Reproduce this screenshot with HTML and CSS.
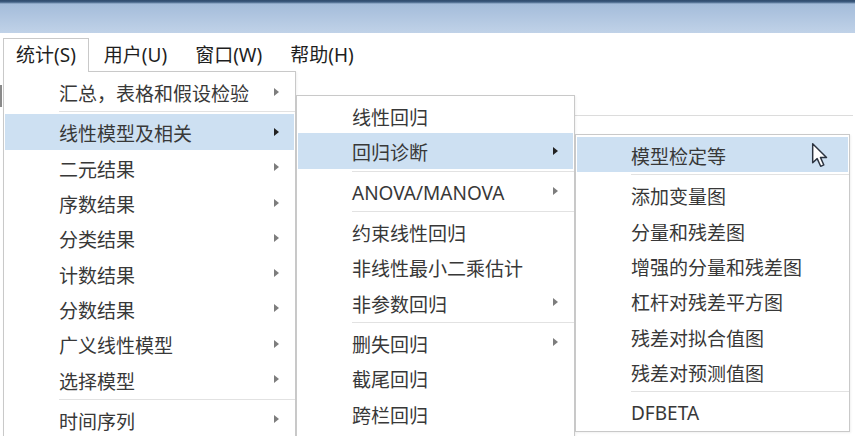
FILE: index.html
```html
<!DOCTYPE html>
<html lang="zh-CN">
<head>
  <meta charset="UTF-8" />
  <title>统计菜单</title>
  <link rel="stylesheet" href="styles.css">
</head>
<body>

  <div class="titlebar"></div>

  <div class="menubar">
    <div class="mb-item open">统计(S)</div>
    <div class="mb-item">用户(U)</div>
    <div class="mb-item">窗口(W)</div>
    <div class="mb-item">帮助(H)</div>
  </div>

  <div class="workspace">
    <div class="backdrop">
      <div class="bd-stub"></div>
      <div class="bd-line"></div>
    </div>

    <ul class="menu menu-main">
      <li class="item sub"><span>汇总，表格和假设检验</span></li>
      <li class="sep"></li>
      <li class="item sub active"><span>线性模型及相关</span></li>
      <li class="item sub"><span>二元结果</span></li>
      <li class="item sub"><span>序数结果</span></li>
      <li class="item sub"><span>分类结果</span></li>
      <li class="item sub"><span>计数结果</span></li>
      <li class="item sub"><span>分数结果</span></li>
      <li class="item sub"><span>广义线性模型</span></li>
      <li class="item sub"><span>选择模型</span></li>
      <li class="sep"></li>
      <li class="item sub"><span>时间序列</span></li>
    </ul>

    <ul class="menu menu-reg">
      <li class="item"><span>线性回归</span></li>
      <li class="item sub active"><span>回归诊断</span></li>
      <li class="sep"></li>
      <li class="item sub"><span>ANOVA/MANOVA</span></li>
      <li class="sep"></li>
      <li class="item"><span>约束线性回归</span></li>
      <li class="item"><span>非线性最小二乘估计</span></li>
      <li class="item sub"><span>非参数回归</span></li>
      <li class="sep"></li>
      <li class="item sub"><span>删失回归</span></li>
      <li class="item"><span>截尾回归</span></li>
      <li class="item"><span>跨栏回归</span></li>
    </ul>

    <ul class="menu menu-diag">
      <li class="item active"><span>模型检定等</span></li>
      <li class="sep"></li>
      <li class="item"><span>添加变量图</span></li>
      <li class="item"><span>分量和残差图</span></li>
      <li class="item"><span>增强的分量和残差图</span></li>
      <li class="item"><span>杠杆对残差平方图</span></li>
      <li class="item"><span>残差对拟合值图</span></li>
      <li class="item"><span>残差对预测值图</span></li>
      <li class="sep"></li>
      <li class="item"><span>DFBETA</span></li>
    </ul>

    <svg class="cursor" width="18" height="27" viewBox="0 0 16 24">
      <path d="M1.5 1.5 L1.5 18.5 L5.5 14.8 L8.6 21.6 L11.4 20.4 L8.4 13.7 L13.8 13.7 Z"
            fill="#fff" stroke="#2b3340" stroke-width="1.3" stroke-linejoin="round" />
    </svg>
  </div>

</body>
</html>
```

FILE: styles.css
```css
body {
  margin: 0;
  width: 855px;
  height: 436px;
  overflow: hidden;
  background-color: #fff;
  font-family: "Noto Sans", "Noto Sans CJK SC", sans-serif;
  color: #383838;
}

.titlebar {
  height: 33px;
  background: linear-gradient(#2f4a6c 0, #3d5b80 2px, #a4bcda 4px, #c0d2e8 100%);
}

.menubar {
  position: relative;
  z-index: 2;
  display: flex;
  gap: 2px;
  height: 39px;
  padding: 5px 0 0 3px;
  box-sizing: border-box;
  font-size: 19px;
  color: #1e1e1e;
}

.mb-item {
  height: 34px;
  padding: 0 12px;
  line-height: 33px;
  border: 1px solid transparent;
  border-bottom: 0;
  box-sizing: border-box;
}

.mb-item.open {
  border-color: #c9c9c9;
  background-color: #fff;
}

.workspace {
  position: relative;
  height: 364px;
}

.backdrop {
  display: flex;
  height: 100%;
}

.bd-stub {
  width: 2px;
  height: 22px;
  margin-top: 13px;
  background-color: #8a8a8a;
}

.bd-line {
  width: 278px;
  height: 1px;
  margin: 43px 0 0 573px;
  background-color: #dcdcdc;
}

.menu {
  position: absolute;
  margin: 0;
  padding: 2px 1px;
  list-style: none;
  background-color: #fff;
  border: 1px solid #c9c9c9;
  box-sizing: border-box;
  font-size: 19px;
  box-shadow: 1px 1px 2px rgba(0, 0, 0, 0.06);
}

.menu-main {
  left: 3px;
  top: -1px;
  width: 293px;
  height: 370px;
}

.menu-reg {
  left: 296px;
  top: 23px;
  width: 279px;
  height: 360px;
}

.menu-diag {
  left: 575px;
  top: 62px;
  width: 275px;
}

.item {
  display: flex;
  align-items: center;
  height: 35.3px;
  padding: 0 15px 0 54px;
  white-space: nowrap;
}

.item span {
  padding-top: 3px;
}

.item.active {
  background-color: #cde0f2;
}

.item.sub::after {
  content: "";
  margin-left: auto;
  border-left: 5px solid #7d7d7d;
  border-top: 4.5px solid transparent;
  border-bottom: 4.5px solid transparent;
}

.item.sub.active::after {
  border-left-color: #222;
}

.sep {
  height: 1px;
  margin: 2px -1px 2px 54px;
  background-color: #e2e2e2;
}

.cursor {
  position: absolute;
  left: 811px;
  top: 70px;
}
```
